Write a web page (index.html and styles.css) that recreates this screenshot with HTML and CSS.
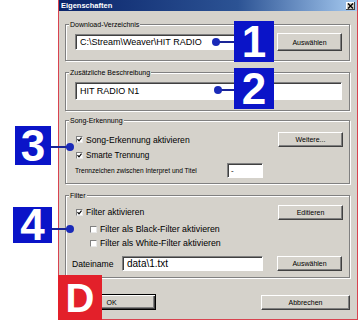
FILE: index.html
```html
<!DOCTYPE html>
<html>
<head>
<meta charset="utf-8">
<link rel="stylesheet" href="styles.css">
</head>
<body>
<div class="dialog">
  <div class="titlebar">
    <span class="title">Eigenschaften</span>
    <span class="close"><svg width="9" height="8" viewBox="0 0 9 8"><path d="M2 1.5 L7 6.5 M7 1.5 L2 6.5" stroke="#000" stroke-width="1.3"/></svg></span>
  </div>
  <div class="content">
    <div class="group g1">
      <div class="glabel">Download-Verzeichnis</div>
      <div class="row r1">
        <div class="input in1">C:\Stream\Weaver\HIT RADIO</div>
        <div class="btn b1">Auswählen</div>
      </div>
    </div>
    <div class="group g2">
      <div class="glabel">Zusätzliche Beschreibung</div>
      <div class="input in2">HIT RADIO N1</div>
    </div>
    <div class="group g3">
      <div class="glabel">Song-Erkennung</div>
      <div class="row r31">
        <label class="check c1"><span class="box"><svg width="5" height="5" viewBox="0 0 5 5"><path d="M0.5 2.2 L2 3.8 L4.6 0.6" stroke="#000" stroke-width="1.2" fill="none"/></svg></span>Song-Erkennung aktivieren</label>
        <div class="btn b2">Weitere...</div>
      </div>
      <div class="row r32">
        <label class="check c2"><span class="box"><svg width="5" height="5" viewBox="0 0 5 5"><path d="M0.5 2.2 L2 3.8 L4.6 0.6" stroke="#000" stroke-width="1.2" fill="none"/></svg></span>Smarte Trennung</label>
      </div>
      <div class="row r33">
        <span class="small">Trennzeichen zwischen Interpret und Titel</span>
        <div class="input in3">-</div>
      </div>
    </div>
    <div class="group g4">
      <div class="glabel">Filter</div>
      <div class="row r41">
        <label class="check c3"><span class="box"><svg width="5" height="5" viewBox="0 0 5 5"><path d="M0.5 2.2 L2 3.8 L4.6 0.6" stroke="#000" stroke-width="1.2" fill="none"/></svg></span>Filter aktivieren</label>
        <div class="btn b3">Editieren</div>
      </div>
      <div class="row r42">
        <label class="check sub"><span class="box"></span>Filter als Black-Filter aktivieren</label>
      </div>
      <div class="row r43">
        <label class="check sub"><span class="box"></span>Filter als White-Filter aktivieren</label>
      </div>
      <div class="row r44">
        <span class="mid">Dateiname</span>
        <div class="input in4">data\1.txt</div>
        <div class="btn b4">Auswählen</div>
      </div>
    </div>
    <div class="row bottom">
      <div class="btn ok">OK</div>
      <div class="btn cancel">Abbrechen</div>
    </div>
  </div>
</div>

<svg class="connectors" width="359" height="320" viewBox="0 0 359 320">
  <g stroke="#1a2596" stroke-width="2">
    <line x1="216" y1="42" x2="236" y2="42"/>
    <line x1="218" y1="90" x2="236" y2="90"/>
    <line x1="49" y1="147" x2="70" y2="147"/>
    <line x1="50" y1="229" x2="70" y2="229"/>
  </g>
  <g fill="#1a2ab8">
    <circle cx="216" cy="42" r="4"/>
    <circle cx="218" cy="90" r="4"/>
    <circle cx="70" cy="147" r="4"/>
    <circle cx="70" cy="229" r="4"/>
  </g>
</svg>
<div class="badge n1">1</div>
<div class="badge n2">2</div>
<div class="badge n3">3</div>
<div class="badge n4">4</div>
<div class="badge red">D</div>
</body>
</html>
```
FILE: styles.css
```css
html, body {
  margin: 0;
  padding: 0;
}
body {
  width: 359px;
  height: 320px;
  background: #ffffff;
  position: relative;
  overflow: hidden;
  font-family: "Liberation Sans", Arial, sans-serif;
  color: #000;
}
.dialog {
  margin-left: 58px;
  width: 300px;
  height: 320px;
  box-sizing: border-box;
  border: 1px solid #d9434f;
  border-top: none;
  background: #d5d2cb;
  display: flex;
  flex-direction: column;
}
.titlebar {
  height: 11px;
  flex: none;
  background: linear-gradient(to right, #0a246a 0%, #2c5394 60%, #a6caf0 100%);
  display: flex;
  align-items: center;
  justify-content: space-between;
  padding: 0 2px 0 2px;
}
.title {
  color: #fff;
  font-weight: bold;
  font-size: 7.5px;
  line-height: 11px;
}
.close {
  width: 9px;
  height: 8px;
  background: #d4d0c8;
  box-shadow: inset -1px -1px 0 #404040, inset 1px 1px 0 #fff;
  display: flex;
}
.content {
  padding: 0 7px 0 6px;
  display: flex;
  flex-direction: column;
}
.group {
  box-sizing: border-box;
  border: 1px solid #808080;
  box-shadow: inset 1px 1px 0 #fff, 1px 1px 0 #fff;
  flex: none;
}
.glabel {
  width: fit-content;
  margin: -5px 0 0 3px;
  padding: 0 1px;
  height: 9px;
  line-height: 9px;
  font-size: 7px;
  background: #d5d2cb;
  white-space: nowrap;
}
.row {
  display: flex;
  align-items: center;
}
.input {
  box-sizing: border-box;
  background: #fff;
  border: 1px solid;
  border-color: #808080 #fff #fff #808080;
  box-shadow: inset 1px 1px 0 #404040;
  display: flex;
  align-items: center;
  white-space: nowrap;
  overflow: hidden;
}
.btn {
  box-sizing: border-box;
  background: #d5d2cb;
  border: 1px solid;
  border-color: #fff #404040 #404040 #fff;
  box-shadow: inset -1px -1px 0 #808080;
  font-size: 7px;
  display: flex;
  align-items: center;
  justify-content: center;
  white-space: nowrap;
  flex: none;
}
.check {
  display: flex;
  align-items: center;
  font-size: 8.6px;
  white-space: nowrap;
}
.box {
  box-sizing: border-box;
  width: 7px;
  height: 7px;
  background: #fff;
  border: 1px solid;
  border-color: #808080 #e8e8e8 #e8e8e8 #808080;
  margin-right: 3px;
  display: flex;
  align-items: center;
  justify-content: center;
  flex: none;
}

/* group 1 */
.g1 { margin-top: 13px; height: 37px; }
.r1 { margin-top: 4px; height: 18px; padding-left: 9px; }
.in1 { width: 196px; height: 16px; font-size: 9px; padding-left: 4px; }
.b1 { width: 65px; height: 18px; margin-left: 6px; }

/* group 2 */
.g2 { margin-top: 11px; height: 39px; }
.in2 { margin: 5px 0 0 9px; width: 267px; height: 18px; font-size: 9px; padding-left: 4px; }

/* group 3 */
.g3 { margin-top: 9px; height: 64px; }
.r31 { margin-top: 7px; height: 15px; }
.c1 { margin-left: 10px; width: 191px; }
.b2 { width: 65px; height: 15px; margin-left: auto; margin-right: 6px; }
.r32 { margin-top: 2px; height: 12px; }
.c2 { margin-left: 10px; font-size: 8.2px; }
.r33 { margin-top: 2px; height: 15px; }
.small { margin-left: 9px; font-size: 6.6px; width: 152px; white-space: nowrap; }
.in3 { width: 36px; height: 15px; font-size: 8px; padding-left: 3px; }

/* group 4 */
.g4 { margin-top: 11px; height: 83px; }
.r41 { margin-top: 4px; height: 16px; }
.c3 { margin-left: 10px; font-size: 8.6px; }
.b3 { width: 65px; height: 15px; margin-left: auto; margin-right: 6px; }
.r42 { margin-top: 3px; height: 12px; }
.r43 { margin-top: 2px; height: 12px; }
.sub { margin-left: 24px; font-size: 8.8px; }
.r44 { margin-top: 7px; height: 15px; }
.mid { margin-left: 6px; width: 50px; font-size: 8.6px; }
.in4 { width: 141px; height: 15px; font-size: 10px; padding-left: 4px; }
.b4 { width: 65px; height: 15px; margin-left: 14px; }

/* bottom */
.bottom { margin-top: 16px; justify-content: space-between; }
.ok {
  margin-left: 2px;
  width: 89px;
  height: 16px;
  border: 1px solid #000;
  box-shadow: inset 1px 1px 0 #fff, inset -1px -1px 0 #404040, inset -2px -2px 0 #808080;
}
.cancel { width: 89px; height: 15px; }

/* annotations */
.connectors {
  position: absolute;
  left: 0;
  top: 0;
}
.badge {
  position: absolute;
  background: #0a14c8;
  color: #fff;
  font-weight: bold;
  font-size: 44px;
  display: flex;
  align-items: center;
  justify-content: center;
  line-height: 1;
}
.n1 { left: 234px; top: 21px; width: 40px; height: 41px; }
.n2 { left: 234px; top: 68px; width: 40px; height: 41px; }
.n3 { left: 15px; top: 126px; width: 36px; height: 39px; }
.n4 { left: 13px; top: 207px; width: 39px; height: 36px; }
.red {
  left: 58px;
  top: 275px;
  width: 44px;
  height: 45px;
  background: #e3202a;
  font-size: 40px;
}
```
